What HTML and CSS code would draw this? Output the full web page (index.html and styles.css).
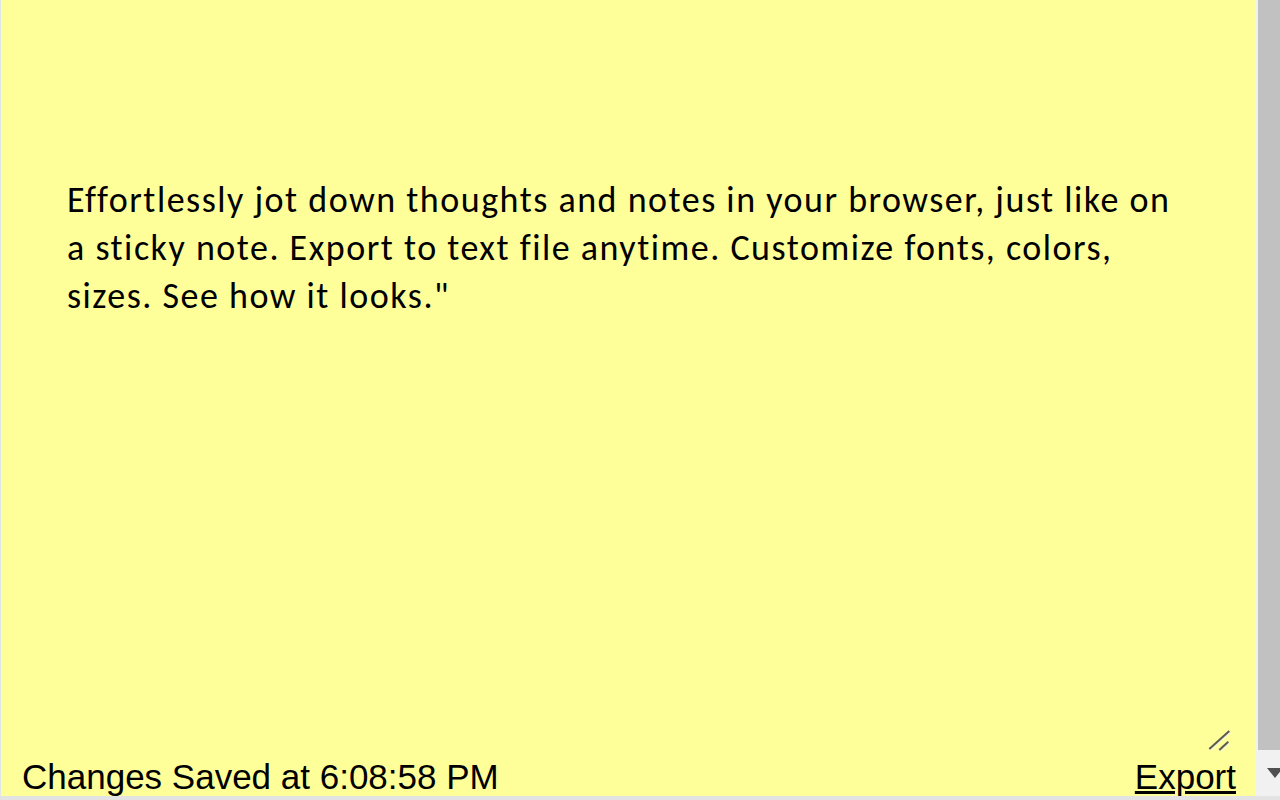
FILE: index.html
```html
<!DOCTYPE html>
<html lang="en">
<head>
<meta charset="utf-8">
<title>Sticky Note</title>
<link rel="stylesheet" href="styles.css">
</head>
<body>
<div class="window">
  <div class="viewport">
    <main class="page">
      <div class="note">
        <div class="note-text">Effortlessly jot down thoughts and notes in your browser, just like on a sticky note. Export to text file anytime. Customize fonts, colors, sizes. See how it looks."</div>
        <svg class="resizer" width="26" height="24" viewBox="0 0 26 24">
          <line x1="4.3" y1="22" x2="24.3" y2="4" stroke="#f4f4d8" stroke-width="2"/>
          <line x1="14.3" y1="23" x2="23.3" y2="14.7" stroke="#f4f4d8" stroke-width="2"/>
          <line x1="3.3" y1="21" x2="23.3" y2="3" stroke="#5a5a50" stroke-width="2"/>
          <line x1="13.3" y1="22" x2="22.3" y2="13.7" stroke="#5a5a50" stroke-width="2"/>
        </svg>
      </div>
      <footer class="status">
        <span class="saved">Changes Saved at 6:08:58 PM</span>
        <a class="export" href="#">Export</a>
      </footer>
    </main>
    <div class="vscroll">
      <div class="thumb"></div>
      <div class="track"><span class="arrow"></span></div>
    </div>
  </div>
  <div class="hstrip"></div>
</div>
</body>
</html>
```

FILE: styles.css
```css
html, body {
  margin: 0;
  padding: 0;
  height: 100%;
  overflow: hidden;
  background: #ffff99;
}

.window {
  width: 1280px;
  height: 800px;
  display: flex;
  flex-direction: column;
}

.viewport {
  flex: 1;
  display: flex;
  min-height: 0;
}

.page {
  flex: 1;
  background: #ffff99;
  border-left: 1px solid #dfe6e6;
  display: flex;
  flex-direction: column;
  overflow: hidden;
}

.note {
  position: relative;
  flex: none;
  height: 752px;
  width: 1210px;
  margin-left: 21px;
  box-sizing: border-box;
}

.note-text {
  padding: 176px 45px 0 45px;
  font-family: Carlito, Calibri, Lato, sans-serif;
  font-size: 36px;
  letter-spacing: 1.5px;
  line-height: 48px;
  color: #000;
}

.resizer {
  position: absolute;
  right: 0;
  bottom: 0;
}

.status {
  flex: none;
  display: flex;
  justify-content: space-between;
  align-items: baseline;
  padding: 0 20px 0 21px;
  margin-top: 5px;
  font-family: "Liberation Sans", Arial, sans-serif;
  font-size: 35px;
  line-height: 40px;
  color: #000;
}

.export {
  color: #000;
  text-decoration: underline;
}

.vscroll {
  width: 24px;
  flex: none;
  background: #f1f1f1;
  display: flex;
  flex-direction: column;
}

.thumb {
  height: 750px;
  margin-left: 2px;
  background: #c1c1c1;
}

.track {
  flex: 1;
  overflow: hidden;
}

.arrow {
  display: block;
  width: 0;
  height: 0;
  margin-top: 18px;
  margin-left: 11px;
  border-left: 8px solid transparent;
  border-right: 8px solid transparent;
  border-top: 10px solid #505050;
}

.hstrip {
  height: 4px;
  background: #e3e3e3;
}
```
